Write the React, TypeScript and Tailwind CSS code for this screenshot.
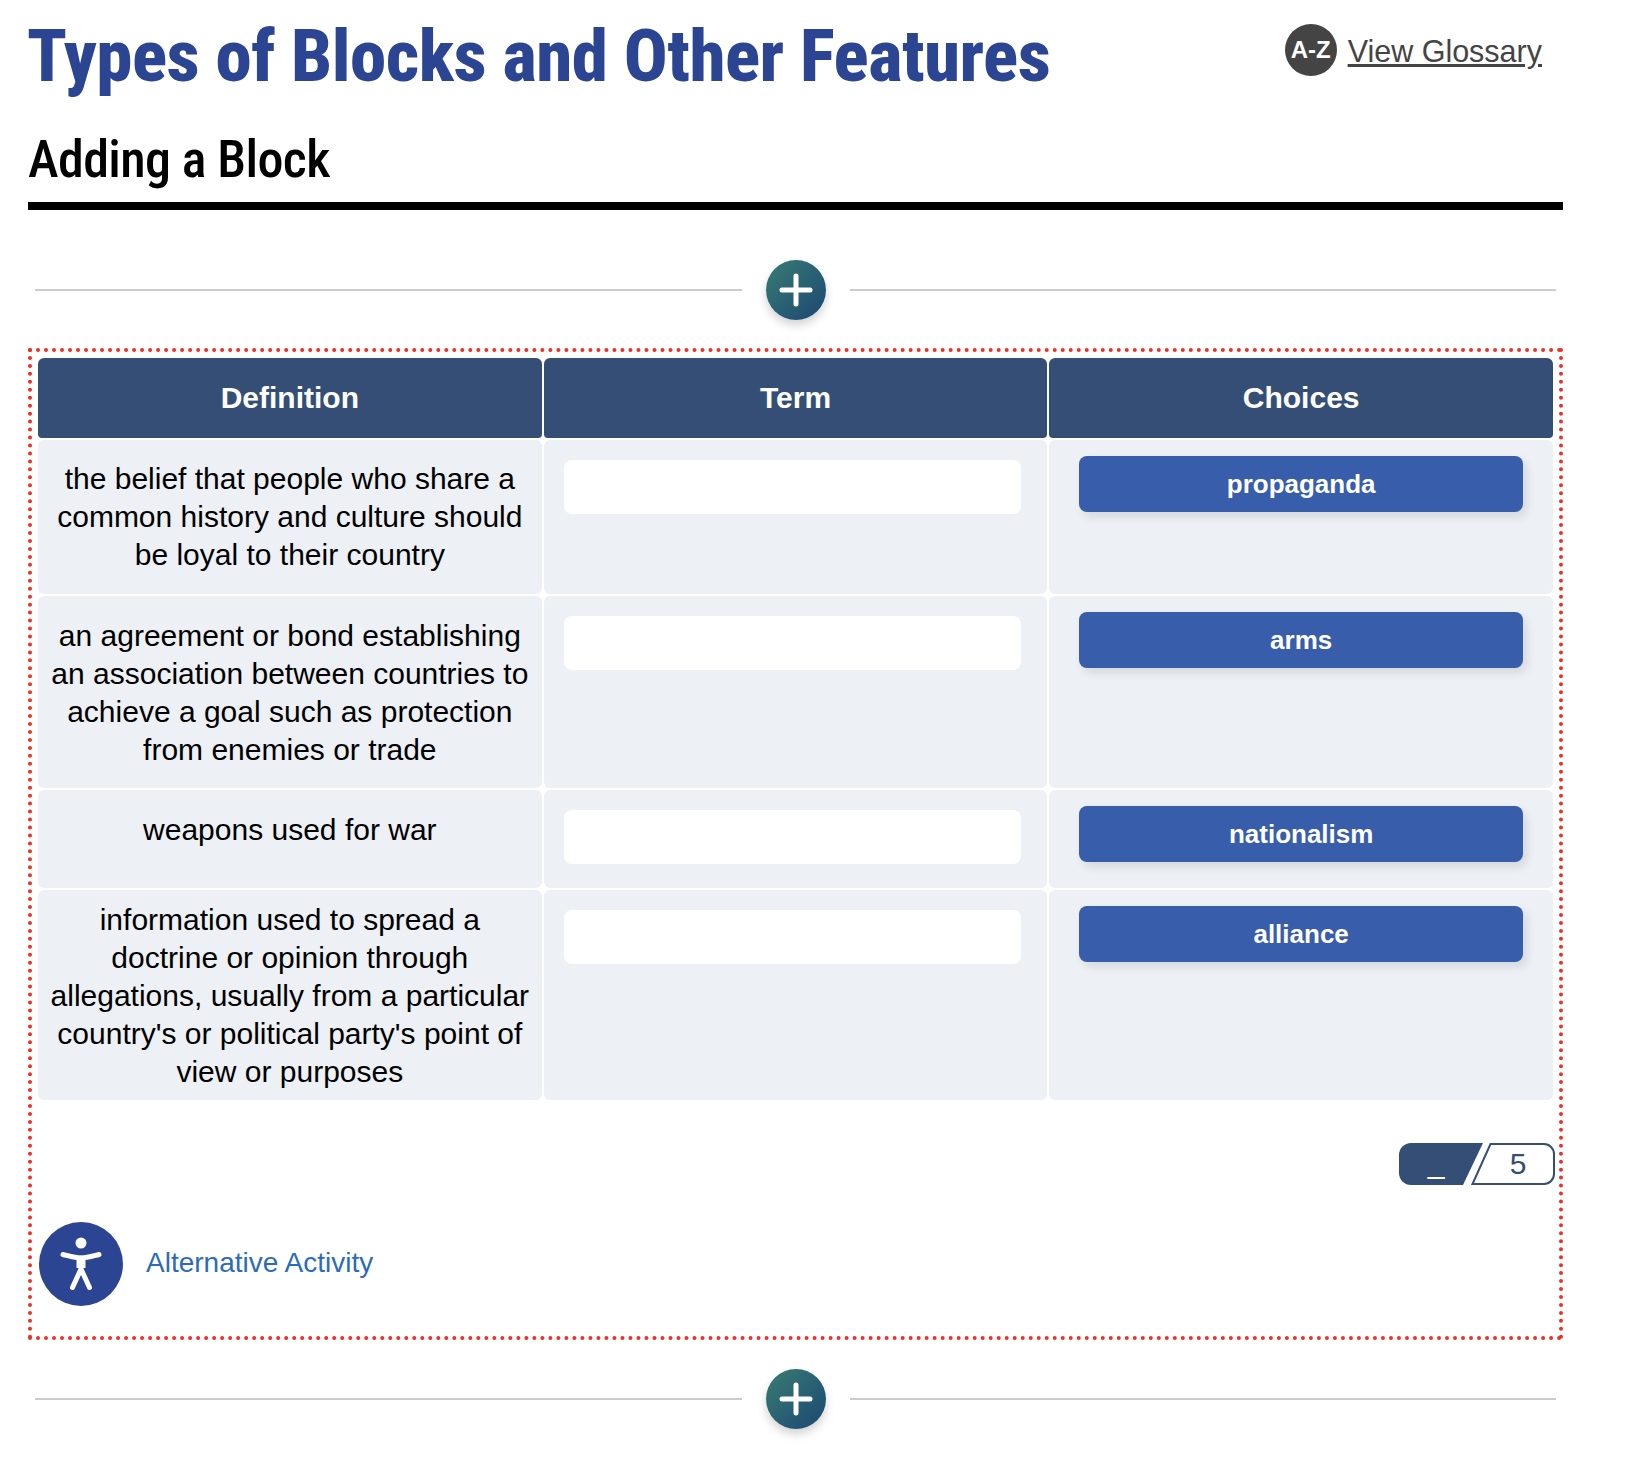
const SANS = "font-['Liberation_Sans',Arial,sans-serif]";

const ROWS = [
  {
    definition: "the belief that people who share a common history and culture should be loyal to their country",
    choice: "propaganda",
    height: "h-[154px]",
    pad: "pt-[20px]",
  },
  {
    definition: "an agreement or bond establishing an association between countries to achieve a goal such as protection from enemies or trade",
    choice: "arms",
    height: "h-[192px]",
    pad: "pt-[21px]",
  },
  { definition: "weapons used for war", choice: "nationalism", height: "h-[98px]", pad: "pt-[21px]" },
  {
    definition: "information used to spread a doctrine or opinion through allegations, usually from a particular country's or political party's point of view or purposes",
    choice: "alliance",
    height: "h-[210px]",
    pad: "pt-[11px]",
  },
];

function AddBlock() {
  return (
    <div className="flex items-center h-[60px] pl-[7px] pr-[7px]">
      <div className="flex-1 h-[2px] bg-[#cccccc]" />
      <button className="mx-[24px] w-[60px] h-[60px] rounded-full flex items-center justify-center bg-gradient-to-br from-[#3a7d72] to-[#1d4671] shadow-[0_5px_10px_rgba(0,0,0,0.18)]">
        <svg width="36" height="36" viewBox="0 0 36 36" fill="none" stroke="#fff" strokeWidth="5" strokeLinecap="round">
          <path d="M18 4v28M4 18h28" />
        </svg>
      </button>
      <div className="flex-1 h-[2px] bg-[#cccccc]" />
    </div>
  );
}

function ScoreBadge() {
  return (
    <div className="relative w-[156px] h-[42px] flex -mr-[2px]">
      <svg className="absolute inset-0" width="156" height="42" viewBox="0 0 156 42">
        <path d="M12 0H84L64 42H12A12 12 0 0 1 0 30V12A12 12 0 0 1 12 0Z" fill="#354e75" />
        <path d="M91.500 1H145A10 10 0 0 1 155 11V31A10 10 0 0 1 145 41H73.500Z" fill="#fff" stroke="#354e75" strokeWidth="2" />
      </svg>
      <span className="relative w-[74px] text-center text-white text-[30px] leading-[40px]">_</span>
      <span className="relative flex-1 pl-[8px] text-center text-[#354e75] text-[30px] leading-[42px]">5</span>
    </div>
  );
}

export default function App() {
  return (
    <div className={`${SANS} min-h-screen bg-white w-[1634px] pl-[28px] pr-[71px]`}>
      <div className="flex justify-between h-[118px]">
        <h1 className="-ml-[1px] font-['Roboto',sans-serif] [font-stretch:75%] font-extrabold tracking-[-0.5px] text-[73px] leading-[112px] text-[#2b4593] whitespace-nowrap">
          Types of Blocks and Other Features
        </h1>
        <a className="flex items-center gap-[11px] h-[100px] pr-[21px] text-[30.500px] text-[#444444]">
          <span className="w-[52px] h-[52px] rounded-full bg-[#444444] text-white text-[24px] font-bold flex items-center justify-center">A-Z</span>
          <span className="underline pt-[3px]">View Glossary</span>
        </a>
      </div>
      <h2 className="font-['Roboto',sans-serif] [font-stretch:75%] font-medium tracking-[-0.6px] text-[52px] leading-[84px] text-black h-[84px] border-b-[8px] border-black box-content">
        Adding a Block
      </h2>

      <div className="pt-[50px] pb-[28px]">
        <AddBlock />
      </div>

      <div className="border-[4px] border-dotted border-[#ee3124] h-[992px] pt-[6px] px-[6px]">
        <div className="grid grid-cols-3 gap-[2px] text-center">
          {["Definition", "Term", "Choices"].map((h) => (
            <div
              key={h}
              className="h-[80px] pb-[2px] bg-[#354e75] text-white font-bold text-[30px] flex items-center justify-center rounded-t-md rounded-b-sm"
            >
              {h}
            </div>
          ))}
          {ROWS.map((r) => (
            <div key={r.choice} className={`col-span-3 grid grid-cols-3 gap-[2px] ${r.height}`}>
              <div className={`bg-[#edf0f5] rounded-md px-[8px] ${r.pad} text-[30px] leading-[38px] text-black`}>
                {r.definition}
              </div>
              <div className="bg-[#edf0f5] rounded-md pt-[20px] pl-[20px] pr-[26px]">
                <div className="h-[54px] bg-white rounded-lg" />
              </div>
              <div className="bg-[#edf0f5] rounded-md pt-[16px] pl-[30px] pr-[30px]">
                <div className="h-[56px] rounded-lg bg-[#385dab] text-white font-bold text-[26px] flex items-center justify-center shadow-[4px_5px_10px_rgba(0,0,0,0.1)]">
                  {r.choice}
                </div>
              </div>
            </div>
          ))}
        </div>
        <div className="flex justify-end mt-[43px]">
          <ScoreBadge />
        </div>
        <div className="flex items-center gap-[23px] mt-[37px] pl-[1px]">
          <span className="w-[84px] h-[84px] rounded-full bg-[#2b4593] flex items-center justify-center">
            <svg width="84" height="84" viewBox="0 0 84 84" fill="none" stroke="#fff" strokeWidth="5" strokeLinecap="round" strokeLinejoin="round">
              <circle cx="42" cy="21" r="5.500" fill="#fff" stroke="none" />
              <path d="M24 32.500C30 34 36 36 42 36S54 34 60 32.500" />
              <path d="M42 36V47L33.500 65.500M42 47L50.500 65.500" />
              <path d="M42 38V46" strokeWidth="9" strokeLinecap="butt" />
            </svg>
          </span>
          <span className="text-[28px] text-[#2b6cb8] pb-[2px]">Alternative Activity</span>
        </div>
      </div>

      <div className="pt-[29px]">
        <AddBlock />
      </div>
    </div>
  );
}
